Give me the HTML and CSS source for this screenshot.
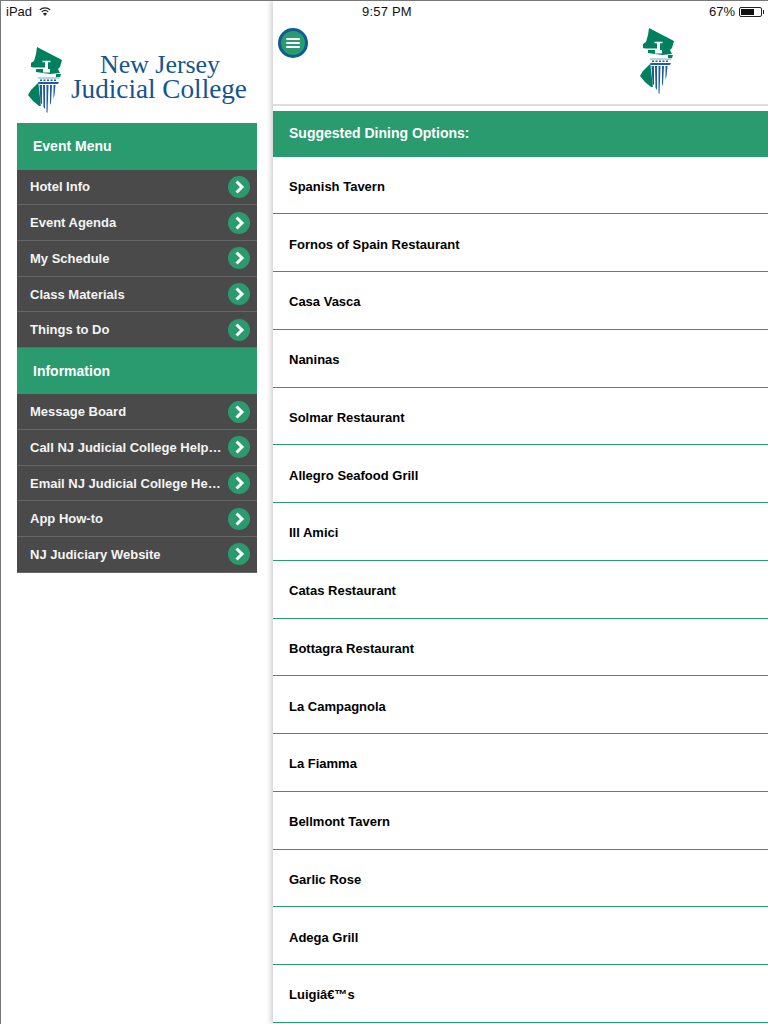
FILE: index.html
```html
<!DOCTYPE html>
<html lang="en">

<head>
  <meta charset="UTF-8">
  <meta name="viewport" content="width=device-width, initial-scale=1.0">
  <title>Suggested Dining Options</title>
  <link rel="stylesheet" href="styles.css">
</head>

<body>
  <svg class="defs" width="0" height="0">
    <symbol id="njMark" viewBox="0 0 36 66">
      <path fill="#00805f" d="M9 0 L34 13 L32 20 L30 22 L32 26 L22 27 L8 25 L8 22 L3 20 L3 16 L6 14 L8 7 Z" />
      <path fill="#00805f" d="M28 27 H33 L32 30 H28 Z" />
      <path fill="#fff" d="M2 20.5 H17 V15.3 H14.5 V13.7 H22.5 V15.3 H20 V22 H22 V25.5 H15 V22 H2 Z" />
      <path fill="#00805f" d="M10 36 L12 37 L14 59 L11 59 L5 54 L0 48 L3 43 Z" />
      <path fill="#b9d3e6" d="M10 30 H32 L31 32 H10 Z" />
      <path fill="#1d5c9e" d="M12 32.5 H14 V34 H12 Z M15.5 32.5 H17.5 V34 H15.5 Z M19 32.5 H21 V34 H19 Z M22.5 32.5 H24.5 V34 H22.5 Z M26 32.5 H28 V34 H26 Z" />
      <path fill="#1d5c9e" d="M10 35 H31 L30 37 H11 Z" />
      <path fill="#fff" d="M10.5 37 H29 L27 54 L20 66 H18 L13 60 Z" />
      <path fill="#1d5c9e" d="M11.5 38 H14 V57 L12.5 56 Z M15 38 H17 V62 L15.5 60 Z M18.5 38 H20.5 L19.5 66 L18.5 65 Z M22 38 H24 L23 56 L22 58 Z M25.5 38 H27.5 L26.5 48 L25.5 52 Z" />
    </symbol>
    <symbol id="arrow" viewBox="0 0 22 22">
      <circle cx="11" cy="11" r="11" fill="#2a9a6f" />
      <path d="M8.5 5.5 L14 11 L8.5 16.5" fill="none" stroke="#fff" stroke-width="3" />
    </symbol>
  </svg>

  <div class="status-bar">
    <div class="status-left">
      <span>iPad</span>
      <svg class="wifi" viewBox="0 0 12 9" width="12" height="9">
        <path fill="#222" d="M6 9 L4 6.6 A3 3 0 0 1 8 6.6 Z" />
        <path fill="none" stroke="#222" stroke-width="1.2" d="M2.7 4.9 A5 5 0 0 1 9.3 4.9 M.8 2.9 A7.6 7.6 0 0 1 11.2 2.9" />
      </svg>
    </div>
    <div class="status-time">9:57 PM</div>
    <div class="status-right">
      <span>67%</span>
      <div class="battery"><div class="battery-level"></div></div>
      <div class="battery-tip"></div>
    </div>
  </div>

  <div class="app">
    <aside class="sidebar">
      <div class="brand">
        <svg class="brand-mark"><use href="#njMark" /></svg>
        <div class="brand-name">
          <div class="brand-top">New Jersey</div>
          <div>Judicial College</div>
        </div>
      </div>

      <nav class="menu">
        <h2 class="menu-title">Event Menu</h2>
        <a class="menu-item"><span>Hotel Info</span><svg class="go"><use href="#arrow" /></svg></a>
        <a class="menu-item"><span>Event Agenda</span><svg class="go"><use href="#arrow" /></svg></a>
        <a class="menu-item"><span>My Schedule</span><svg class="go"><use href="#arrow" /></svg></a>
        <a class="menu-item"><span>Class Materials</span><svg class="go"><use href="#arrow" /></svg></a>
        <a class="menu-item"><span>Things to Do</span><svg class="go"><use href="#arrow" /></svg></a>
        <h2 class="menu-title">Information</h2>
        <a class="menu-item"><span>Message Board</span><svg class="go"><use href="#arrow" /></svg></a>
        <a class="menu-item"><span>Call NJ Judicial College Help…</span><svg class="go"><use href="#arrow" /></svg></a>
        <a class="menu-item"><span>Email NJ Judicial College He…</span><svg class="go"><use href="#arrow" /></svg></a>
        <a class="menu-item"><span>App How-to</span><svg class="go"><use href="#arrow" /></svg></a>
        <a class="menu-item"><span>NJ Judiciary Website</span><svg class="go"><use href="#arrow" /></svg></a>
      </nav>
    </aside>

    <main class="content">
      <header class="topbar">
        <button class="menu-btn" aria-label="Menu">
          <span></span><span></span><span></span>
        </button>
        <svg class="topbar-mark"><use href="#njMark" /></svg>
      </header>

      <h1 class="page-title">Suggested Dining Options:</h1>
      <ul class="dining">
        <li>Spanish Tavern</li>
        <li>Fornos of Spain Restaurant</li>
        <li>Casa Vasca</li>
        <li>Naninas</li>
        <li>Solmar Restaurant</li>
        <li>Allegro Seafood Grill</li>
        <li>Ill Amici</li>
        <li>Catas Restaurant</li>
        <li>Bottagra Restaurant</li>
        <li>La Campagnola</li>
        <li>La Fiamma</li>
        <li>Bellmont Tavern</li>
        <li>Garlic Rose</li>
        <li>Adega Grill</li>
        <li>Luigiâ€™s</li>
      </ul>
    </main>
  </div>
</body>

</html>
```

FILE: styles.css
```css
* {
  margin: 0;
  padding: 0;
  box-sizing: border-box;
}

html,
body {
  height: 1024px;
  overflow: hidden;
}

body {
  background: #fff;
  color: #000;
  font-family: "Liberation Sans", Arial, sans-serif;
  border-top: 1px solid #777;
  border-left: 1px solid #777;
  position: relative;
}

.defs {
  position: absolute;
}

/* ios status bar sits over both panes */
.status-bar {
  position: absolute;
  top: 0;
  left: 0;
  right: 0;
  height: 20px;
  z-index: 5;
  font-size: 13px;
  color: #111;
}

.status-left {
  position: absolute;
  left: 5px;
  top: 3px;
  display: flex;
  align-items: center;
  gap: 7px;
}

.status-time {
  position: absolute;
  left: 361px;
  top: 3px;
  letter-spacing: .2px;
}

.status-right {
  position: absolute;
  right: 4px;
  top: 3px;
  display: flex;
  align-items: center;
}

.battery {
  width: 23px;
  height: 10px;
  margin-left: 4px;
  border: 1px solid #222;
  border-radius: 2px;
  padding: 1px;
}

.battery-level {
  width: 67%;
  height: 100%;
  background: #111;
}

.battery-tip {
  width: 1px;
  height: 4px;
  margin-left: 1px;
  background: #222;
}

.app {
  display: flex;
  height: 100%;
}

.sidebar {
  width: 272px;
  flex-shrink: 0;
  padding-left: 16px;
}

.brand {
  height: 122.3px;
  padding: 46px 0 0 11px;
  display: flex;
}

.brand-mark {
  width: 36px;
  height: 66px;
  flex-shrink: 0;
}

.brand-name {
  margin: 6px 0 0 7px;
  font-family: "Liberation Serif", "Times New Roman", serif;
  font-size: 27.2px;
  line-height: 25px;
  color: #14558f;
  white-space: nowrap;
}

.brand-top {
  padding-left: 29px;
  font-size: 25.9px;
  line-height: 24px;
}

.menu {
  width: 240px;
}

.menu-title {
  height: 46.3px;
  padding-left: 16px;
  background: #2a9a6f;
  color: #fff;
  font-size: 14px;
  font-weight: bold;
  line-height: 46px;
}

.menu-item {
  display: flex;
  align-items: center;
  justify-content: space-between;
  height: 35.7px;
  padding: 0 7px 0 13px;
  background: #4a4a4a;
  border-bottom: 1px solid #666;
  color: #f4f4f4;
  font-size: 13px;
  font-weight: bold;
}

.go {
  width: 22px;
  height: 22px;
  flex-shrink: 0;
}

.content {
  flex: 1;
  min-width: 0;
  background: #fff;
  box-shadow: -2px 0 5px rgba(0, 0, 0, .2);
  position: relative;
}

.topbar {
  height: 105px;
  border-bottom: 2px solid #ddd;
  position: relative;
  padding: 27px 0 0 367px;
}

.menu-btn {
  position: absolute;
  left: 5px;
  top: 27px;
  width: 30px;
  height: 30px;
  border: 3px solid #0f5c94;
  border-radius: 50%;
  background: #2a9a6f;
  display: flex;
  flex-direction: column;
  align-items: center;
  justify-content: center;
  gap: 2px;
}

.menu-btn span {
  width: 14px;
  height: 2px;
  background: #fff;
  border-radius: 1px;
}

.topbar-mark {
  width: 36px;
  height: 66px;
}

.page-title {
  margin-top: 5px;
  height: 45.6px;
  padding-left: 16px;
  background: #2a9a6f;
  color: #fff;
  font-size: 14px;
  font-weight: bold;
  line-height: 45px;
}

.dining {
  list-style: none;
}

.dining li {
  height: 57.75px;
  display: flex;
  align-items: center;
  padding: 3px 0 0 16px;
  border-bottom: 1px solid #2a9a6f;
  font-size: 13px;
  font-weight: bold;
}
```
